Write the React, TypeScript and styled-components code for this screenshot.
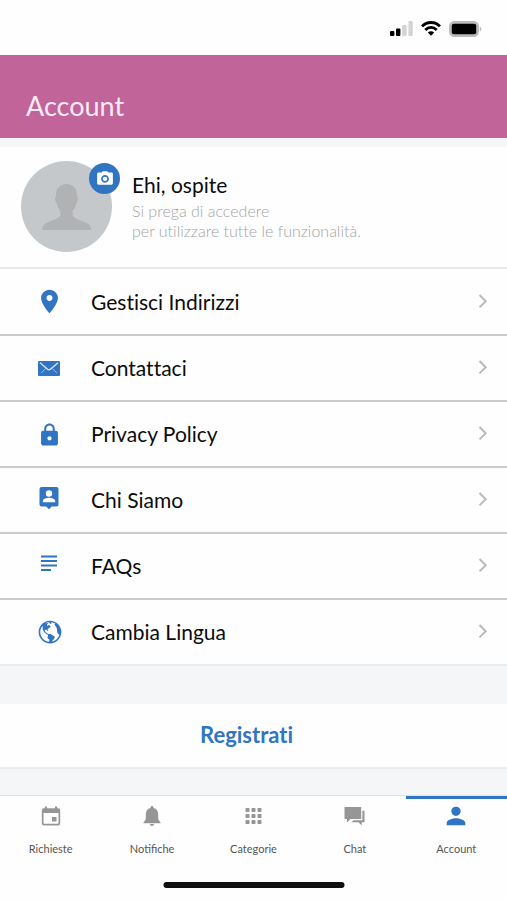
import React from 'react';
import styled, { createGlobalStyle } from 'styled-components';
import { MdPerson } from 'react-icons/md';
import { IoMdPin, IoMdLock, IoMdGlobe, IoMdCamera } from 'react-icons/io';

const GlobalStyle = createGlobalStyle`
  * { box-sizing: border-box; }
  body {
    margin: 0;
    background: #f4f6f8;
    color: #0c0c0c;
    font-family: Lato, sans-serif;
    font-variant-ligatures: no-common-ligatures;
  }
`;

const Page = styled.div`
  display: flex;
  flex-direction: column;
  min-height: 100vh;
`;

const StatusBar = styled.div`
  display: flex;
  justify-content: flex-end;
  align-items: center;
  gap: 8px;
  height: 55px;
  padding: 2px 25px 0 0;
  background: #fefefe;
`;

const Header = styled.header`
  display: flex;
  align-items: center;
  height: 83px;
  padding: 18px 26px 0;
  background: #c0649a;
`;

const Title = styled.h1`
  margin: 0;
  font-size: 27px;
  line-height: 32px;
  font-weight: 400;
  color: #fbeaf4;
`;

const Profile = styled.section`
  display: flex;
  align-items: center;
  gap: 20px;
  height: 120px;
  margin-top: 9px;
  padding: 0 0 2px 21px;
  background: #fefefe;
`;

const Avatar = styled.div`
  position: relative;
  width: 91px;
  height: 91px;
`;

const CameraButton = styled.button`
  position: absolute;
  top: 2px;
  right: -8px;
  display: grid;
  place-items: center;
  width: 31px;
  height: 31px;
  padding: 0;
  border: 0;
  border-radius: 50%;
  background: #3174c2;
  color: #fff;
`;

const Intro = styled.div`
  padding-bottom: 2px;
`;

const Greeting = styled.h2`
  margin: 0;
  font-size: 21px;
  line-height: 32px;
  font-weight: 400;
`;

const Hint = styled.p`
  margin: 0;
  font-size: 16px;
  line-height: 20px;
  font-weight: 300;
  color: #a4a4a4;
`;

const Menu = styled.nav`
  border-top: 2px solid #e9eaea;
  border-bottom: 2px solid #e9ebec;
  background: #fefefe;
`;

const MenuItem = styled.a`
  display: flex;
  align-items: center;
  height: 66px;
  padding: 0 19px 0 36px;
  color: inherit;
  font-size: 21px;
  line-height: 28px;
  text-decoration: none;

  & + & {
    border-top: 2px solid #cbcbcb;
  }

  &:first-child {
    height: 65px;
  }
`;

const MenuIcon = styled.span`
  display: grid;
  place-items: center;
  width: 26px;
  height: 28px;
  margin-right: 29px;
  color: #3174c2;
`;

const MenuLabel = styled.span`
  flex: 1;
`;

const RegisterButton = styled.button`
  height: 65px;
  margin-top: 38px;
  padding: 0 14px 2px 0;
  border: 0;
  border-bottom: 2px solid #e9ebec;
  background: #fefefe;
  color: #3174c2;
  font-family: inherit;
  font-size: 22px;
  line-height: 28px;
  font-weight: 700;
  font-variant-ligatures: no-common-ligatures;
`;

const TabBar = styled.nav`
  position: relative;
  display: grid;
  grid-template-columns: repeat(5, 1fr);
  height: 105px;
  margin-top: auto;
  border-top: 1px solid #dfe1e2;
  background: #fefefe;
`;

const Tab = styled.a<{ $active?: boolean }>`
  display: flex;
  flex-direction: column;
  align-items: center;
  gap: 11px;
  padding-top: 3px;
  border-top: 3px solid ${(p) => (p.$active ? '#3174c2' : 'transparent')};
  color: ${(p) => (p.$active ? '#3174c2' : '#969696')};
  text-decoration: none;
`;

const TabIcon = styled.span`
  display: grid;
  place-items: center;
  width: 28px;
  height: 28px;
`;

const TabLabel = styled.span`
  color: #555;
  font-size: 11px;
  line-height: 16px;
  font-variant-ligatures: common-ligatures;
`;

const HomeIndicator = styled.div`
  position: absolute;
  bottom: 12px;
  left: 50%;
  width: 181px;
  height: 6px;
  border-radius: 3px;
  background: #101010;
  transform: translateX(-50%);
`;

const Signal = () => (
  <svg width="23" height="15" viewBox="0 0 23 15" aria-hidden="true">
    <rect x="0" y="10" width="4.4" height="5" rx="1" fill="#000" />
    <rect x="6" y="7.5" width="4.4" height="7.5" rx="1" fill="#000" />
    <rect x="12.2" y="4" width="4.4" height="11" rx="1" fill="#d4d4d4" />
    <rect x="18.4" y="0" width="4.4" height="15" rx="1" fill="#d4d4d4" />
  </svg>
);

const Wifi = () => (
  <svg width="20" height="15" viewBox="0 0 20 15" aria-hidden="true">
    <g fill="none" stroke="#000" strokeWidth="2.8">
      <path d="M1 5.400C6 .2 14 .2 19 5.400" />
      <path d="M4.300 9c3.200-3.400 8.200-3.400 11.400 0" />
    </g>
    <path d="M10 14.800 6.800 11.400c1.800-1.700 4.600-1.700 6.400 0z" />
  </svg>
);

const Battery = () => (
  <svg width="33" height="16" viewBox="0 0 33 16" aria-hidden="true">
    <rect x="1" y="1" width="28" height="14" rx="4.5" fill="#bbb" stroke="#bbb" strokeWidth="2" />
    <rect x="2.800" y="2.800" width="24.400" height="10.400" rx="2" />
    <path d="M30.800 5.500c2 .8 2 4.200 0 5z" fill="#bbb" />
  </svg>
);

const Silhouette = () => (
  <svg width="91" height="91" viewBox="0 0 91 91" aria-hidden="true">
    <circle cx="45.5" cy="45.5" r="45.5" fill="#c5c8cb" />
    <path
      fill="#b0b2b4"
      d="M45.500 23c7 0 11 5 10.500 13 1.300.5 1 5-.8 6.500-.8 3.500-2 5.500-3.500 7v5c1 4 15 6 17.500 10.500l1 4H21l1-4C24.500 60.500 38 58.500 39.300 54.500v-5c-1.500-1.500-2.700-3.500-3.500-7C34 41 33.700 36.500 35 36c-.5-8 3.500-13 10.500-13z"
    />
  </svg>
);

const Chevron = () => (
  <svg width="10" height="16" viewBox="0 0 10 16" aria-hidden="true">
    <path d="m1.500 1 6.200 6.200-6.200 6.200" fill="none" stroke="#bababa" strokeWidth="2" />
  </svg>
);

const Envelope = () => (
  <svg width="22" height="15" viewBox="0 0 22 15" aria-hidden="true">
    <rect width="22" height="15" rx="1" fill="currentColor" />
    <g fill="none" stroke="#dce9f7">
      <path d="m2 1.800 7.600 6.500c.8.700 2 .7 2.800 0L20 1.800" strokeWidth="1.300" />
      <path d="m3.200 12 4.600-4.600M18.800 12l-4.600-4.600" strokeWidth=".6" />
    </g>
  </svg>
);

const ContactPin = () => (
  <svg width="20" height="26" viewBox="0 0 20 26" aria-hidden="true">
    <path
      fill="currentColor"
      d="M2.500 0h15A2 2 0 0 1 19.500 2v15.500a2 2 0 0 1-2 2h-4.700L10 22.300l-2.800-2.800H2.500a2 2 0 0 1-2-2V2a2 2 0 0 1 2-2z"
    />
    <circle cx="10" cy="6.500" r="3.200" fill="#fff" />
    <path d="M3.800 15.200V14c0-2.100 4.100-3.200 6.200-3.200s6.200 1.100 6.200 3.200v1.200z" fill="#fff" />
  </svg>
);

const TextLines = () => (
  <svg width="16" height="22" viewBox="0 0 16 22" aria-hidden="true">
    <path d="M0 .5h16v2H0zM0 5h16v2H0zM0 9.500h16v2H0zM0 14h10v2H0z" fill="currentColor" />
  </svg>
);

const Calendar = () => (
  <svg width="20" height="20" viewBox="0 0 20 20" aria-hidden="true">
    <path
      fill="currentColor"
      fillRule="evenodd"
      d="M3.800.5h2.200v1.800h8V.5h2.200v1.800h.8a2.200 2.200 0 0 1 2.200 2.200v12.700a2.200 2.200 0 0 1-2.200 2.200H3a2.200 2.200 0 0 1-2.200-2.200V4.500A2.200 2.200 0 0 1 3 2.300h.8zM2.500 7v10.100c0 .4.300.7.700.7h13.600c.4 0 .7-.3.7-.7V7z"
    />
    <rect x="11" y="11" width="4.500" height="4.500" fill="currentColor" />
  </svg>
);

const Bell = () => (
  <svg width="18" height="20" viewBox="0 0 18 20" aria-hidden="true">
    <path
      fill="currentColor"
      d="M9 0c.9 0 1.500.6 1.500 1.500v.4c3.100.7 4.700 3.200 4.700 6.100v5.200l2.300 3.300v.7h-17v-.7l2.300-3.300V8c0-2.900 1.600-5.400 4.700-6.100v-.4C7.500.6 8.100 0 9 0zM7 18h4c0 1.200-.9 2-2 2s-2-.8-2-2z"
    />
  </svg>
);

const Keypad = () => (
  <svg width="17" height="16" viewBox="0 0 17 16" aria-hidden="true">
    <g fill="currentColor">
      {[0, 6, 12].map((y) =>
        [0.5, 6.5, 12.5].map((x) => <rect key={`${x}-${y}`} x={x} y={y} width="4" height="4" rx=".8" />),
      )}
    </g>
  </svg>
);

const Chats = () => (
  <svg width="21" height="19" viewBox="0 0 21 19" aria-hidden="true">
    <path d="M.5 0h16.700v12H6.500L3 15.500V12H.5z" fill="currentColor" />
    <path d="M18.400 3.700h2.100v11.600h-2.800v3.200l-3.300-3.200H7.500l2-2.100h8.900z" fill="currentColor" />
  </svg>
);

const menu = [
  { label: 'Gestisci Indirizzi', icon: <IoMdPin size={27} /> },
  { label: 'Contattaci', icon: <Envelope /> },
  { label: 'Privacy Policy', icon: <IoMdLock size={27} /> },
  { label: 'Chi Siamo', icon: <ContactPin /> },
  { label: 'FAQs', icon: <TextLines /> },
  { label: 'Cambia Lingua', icon: <IoMdGlobe size={28} /> },
];

const tabs = [
  { label: 'Richieste', icon: <Calendar /> },
  { label: 'Notifiche', icon: <Bell /> },
  { label: 'Categorie', icon: <Keypad /> },
  { label: 'Chat', icon: <Chats /> },
  { label: 'Account', icon: <MdPerson size={28} />, active: true },
];

export default function App() {
  return (
    <Page>
      <GlobalStyle />
      <StatusBar>
        <Signal />
        <Wifi />
        <Battery />
      </StatusBar>
      <Header>
        <Title>Account</Title>
      </Header>
      <Profile>
        <Avatar>
          <Silhouette />
          <CameraButton type="button" aria-label="Cambia foto">
            <IoMdCamera size={18} />
          </CameraButton>
        </Avatar>
        <Intro>
          <Greeting>Ehi, ospite</Greeting>
          <Hint>
            Si prega di accedere
            <br />
            per utilizzare tutte le funzionalità.
          </Hint>
        </Intro>
      </Profile>
      <Menu>
        {menu.map((item) => (
          <MenuItem key={item.label} href="#">
            <MenuIcon>{item.icon}</MenuIcon>
            <MenuLabel>{item.label}</MenuLabel>
            <Chevron />
          </MenuItem>
        ))}
      </Menu>
      <RegisterButton type="button">Registrati</RegisterButton>
      <TabBar>
        {tabs.map((tab) => (
          <Tab key={tab.label} href="#" $active={tab.active} aria-current={tab.active ? 'page' : undefined}>
            <TabIcon>{tab.icon}</TabIcon>
            <TabLabel>{tab.label}</TabLabel>
          </Tab>
        ))}
        <HomeIndicator />
      </TabBar>
    </Page>
  );
}
